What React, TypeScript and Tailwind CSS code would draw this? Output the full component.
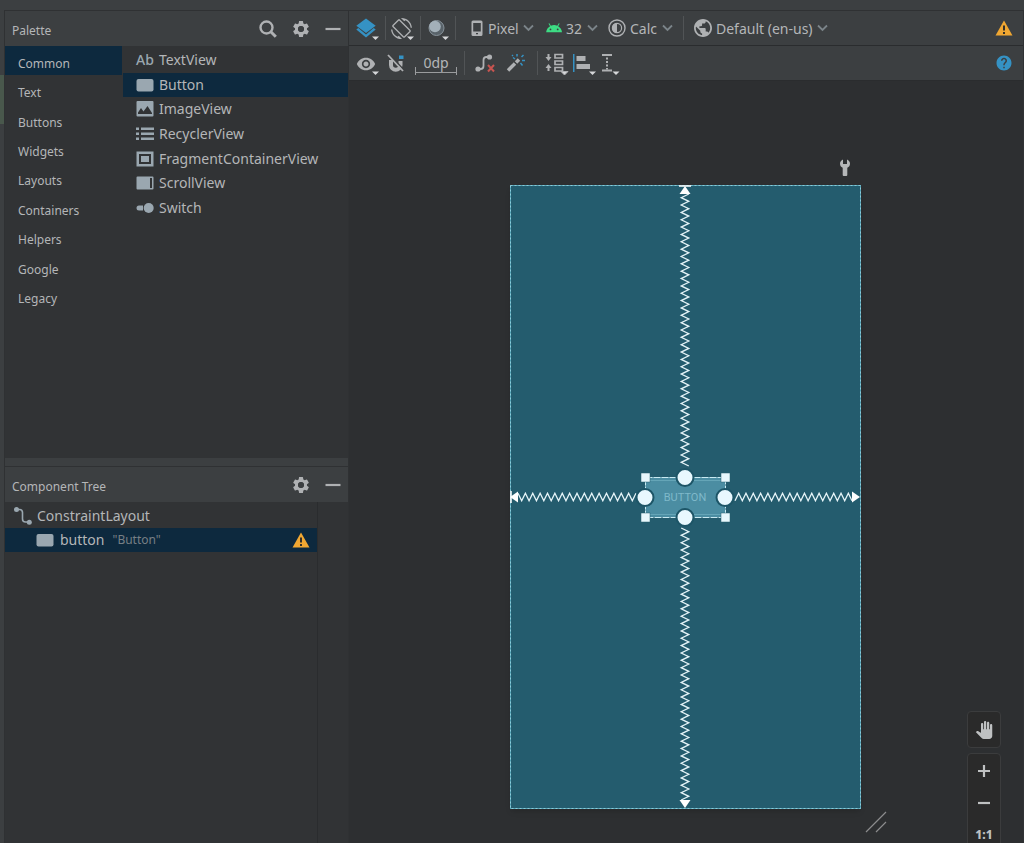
import React, { useState } from "react";
import {
  MdHelp,
  MdPanTool,
  MdPublic,
  MdScreenRotation,
  MdSettings,
  MdVisibility,
} from "react-icons/md";

const categories = [
  "Common",
  "Text",
  "Buttons",
  "Widgets",
  "Layouts",
  "Containers",
  "Helpers",
  "Google",
  "Legacy",
];

const ButtonIcon = () => (
  <svg width="18" height="14" viewBox="0 0 18 14" fill="#9aa7b0">
    <rect x="0.5" y="1" width="17" height="12.5" rx="2" />
  </svg>
);

const WarningIcon = () => (
  <svg width="18" height="18" viewBox="0 0 18 18">
    <path d="M9 1.500 17.500 16.500H.5z" fill="#f0a732" />
    <path d="M8 6.500h2v5H8zM8 13h2v2H8z" fill="#33302a" />
  </svg>
);

const widgets: { name: string; icon: React.ReactNode }[] = [
  {
    name: "TextView",
    icon: <span className="text-[14px] font-medium text-[#9aa7b0]">Ab</span>,
  },
  { name: "Button", icon: <ButtonIcon /> },
  {
    name: "ImageView",
    icon: (
      <svg width="18" height="16" viewBox="0 0 18 16">
        <rect x="0.5" width="17" height="15.5" rx="1" fill="#9aa7b0" />
        <path d="M2 13V11.500L5 7l2.500 3.500L11.500 5l4.500 7v1z" fill="#313335" />
      </svg>
    ),
  },
  {
    name: "RecyclerView",
    icon: (
      <svg width="18" height="14" viewBox="0 0 18 14" fill="#9aa7b0">
        <path d="M0 .5h3v2.5H0zM5 .5h13v2.5H5zM0 5.5h3V8H0zM5 5.5h13V8H5zM0 10.5h3V13H0zM5 10.5h13V13H5z" />
      </svg>
    ),
  },
  {
    name: "FragmentContainerView",
    icon: (
      <svg width="18" height="16" viewBox="0 0 18 16" fill="#9aa7b0">
        <path fillRule="evenodd" d="M.5.5h17v15H.5zM3 3v10h12V3z" />
        <rect x="5" y="5" width="8" height="6" />
      </svg>
    ),
  },
  {
    name: "ScrollView",
    icon: (
      <svg width="18" height="14" viewBox="0 0 18 14" fill="#9aa7b0">
        <path fillRule="evenodd" d="M1.5.5h15a1 1 0 0 1 1 1v11a1 1 0 0 1-1 1h-15a1 1 0 0 1-1-1v-11a1 1 0 0 1 1-1zM14 2v10h2V2z" />
      </svg>
    ),
  },
  {
    name: "Switch",
    icon: (
      <svg width="18" height="12" viewBox="0 0 18 12" fill="#9aa7b0">
        <path d="M7 3.5H3a2.5 2.5 0 0 0 0 5h4z" />
        <circle cx="12.7" cy="6" r="5" />
      </svg>
    ),
  },
];

const Caret = () => <path d="M16 20.5h7L19.5 24z" fill="#d5d7d9" />;

const Separator = () => <div className="h-6 w-px bg-[#515456]" />;

interface IconButtonProps {
  label: string;
  children: React.ReactNode;
  className?: string;
}

const IconButton: React.FC<IconButtonProps> = ({ label, children, className = "" }) => (
  <button aria-label={label} title={label} className={`flex shrink-0 items-center justify-center ${className}`}>
    {children}
  </button>
);

interface PickerProps {
  label: string;
  value: string;
  icon: React.ReactNode;
}

const Picker: React.FC<PickerProps> = ({ label, value, icon }) => (
  <label className="flex shrink-0 items-center gap-1">
    {icon}
    <select aria-label={label} className="appearance-none bg-transparent pt-[2px] text-[14px] leading-5 outline-none">
      <option>{value}</option>
    </select>
    <svg width="11" height="8" viewBox="0 0 11 8" fill="none" stroke="#7b8489" strokeWidth="1.800">
      <path d="M1 1.500 5.500 6 10 1.500" />
    </svg>
  </label>
);

const PanelHeader: React.FC<{ title: string; search?: boolean }> = ({ title, search }) => (
  <div className="flex h-9 shrink-0 items-center gap-[14px] border-t border-[#2f3133] bg-[#3c3f41] px-[7px]">
    <h2 className="flex-1 pt-1 text-[12px] leading-4">{title}</h2>
    {search && (
      <IconButton label="Search">
        <svg width="18" height="18" viewBox="0 0 18 18" fill="none" stroke="#afb1b3">
          <circle cx="7.500" cy="7.500" r="6" strokeWidth="2.400" />
          <path d="m11.800 11.800 5 5" strokeWidth="3" />
        </svg>
      </IconButton>
    )}
    <IconButton label="Settings">
      <svg width="20" height="20" viewBox="0 0 20 20">
        <MdSettings size={20} color="#afb1b3" />
        <circle cx="10" cy="10" r="3" fill="#3c3f41" />
      </svg>
    </IconButton>
    <IconButton label="Hide">
      <svg width="16" height="16" viewBox="0 0 16 16">
        <path d="M.5 8h15" stroke="#afb1b3" strokeWidth="2.200" />
      </svg>
    </IconButton>
  </div>
);

const Palette = () => {
  const [category, setCategory] = useState("Common");
  const [widget, setWidget] = useState("Button");

  return (
    <section className="flex h-[448px] shrink-0 flex-col">
      <PanelHeader title="Palette" search />
      <div className="flex flex-1">
        <ul className="flex h-[265px] w-[117px] flex-col">
          {categories.map((name) => (
            <li key={name} className="flex-1">
              <button
                onClick={() => setCategory(name)}
                className={`h-full w-full pt-[6px] pl-[13px] text-left text-[12px] leading-4 ${
                  name === category ? "bg-[#0d293e]" : ""
                }`}
              >
                {name}
              </button>
            </li>
          ))}
        </ul>
        <ul className="mt-[2px] flex h-[172px] flex-1 flex-col pl-px">
          {widgets.map(({ name, icon }) => (
            <li key={name} className="flex-1">
              <button
                onClick={() => setWidget(name)}
                className={`flex h-full w-full items-center gap-[5px] pl-[13px] text-left text-[14px] leading-5 ${
                  name === widget ? "bg-[#0d293e]" : ""
                }`}
              >
                <span className="flex w-[18px] justify-center">{icon}</span>
                {name}
              </button>
            </li>
          ))}
        </ul>
      </div>
    </section>
  );
};

const ComponentTree = () => (
  <section className="flex min-h-0 flex-1 flex-col">
    <PanelHeader title="Component Tree" />
    <div className="flex flex-1">
      <div className="flex-1 border-r border-[#2a2c2e] pt-[2px]">
        <button className="flex h-6 w-full items-center gap-[5px] pl-[9px] text-[14px] leading-5">
          <svg width="18" height="18" viewBox="0 0 18 18" fill="#9aa7b0">
            <circle cx="2.500" cy="2.500" r="2.500" />
            <circle cx="15.300" cy="15.300" r="2.500" />
            <path d="M3 2.500h2.500a3 3 0 0 1 3 3v6.500a3 3 0 0 0 3 3H15" fill="none" stroke="#9aa7b0" strokeWidth="1.600" />
          </svg>
          ConstraintLayout
        </button>
        <button className="flex h-6 w-full items-center bg-[#0d293e] pr-[7px] pl-[31px] text-[14px] leading-5">
          <ButtonIcon />
          <span className="ml-[6px]">button</span>
          <span className="ml-2 flex-1 text-left text-[12px] text-[#777f85]">"Button"</span>
          <WarningIcon />
        </button>
      </div>
      <div className="w-[30px]" />
    </div>
  </section>
);

const DesignToolbar = () => (
  <div className="flex h-[35px] shrink-0 items-center border-t border-[#2f3133] bg-[#3c3f41] pr-[10px] pl-[7px]">
    <div className="flex items-center gap-[5px]">
      <IconButton label="Select design surface">
        <svg width="24" height="24" viewBox="0 0 24 24">
          <path d="m10 2.500 9.700 7.200L10 17 .3 9.700z" fill="#3592c4" />
          <path d="m.3 13.500 2-1.400L10 18.500l7.700-6.400 2 1.400L10 21.500z" fill="#3592c4" />
          <Caret />
        </svg>
      </IconButton>
      <Separator />
      <IconButton label="Orientation">
        <svg width="24" height="24" viewBox="0 0 24 24">
          <MdScreenRotation x="0" y="2" size={21} color="#afb1b3" />
          <Caret />
        </svg>
      </IconButton>
      <Separator />
      <IconButton label="System UI mode">
        <svg width="24" height="24" viewBox="0 0 24 24">
          <circle cx="10.500" cy="12" r="7.500" fill="#59636a" stroke="#87929a" strokeWidth="1" />
          <circle cx="9" cy="10.500" r="5.800" fill="#a3b0b9" />
          <Caret />
        </svg>
      </IconButton>
      <Separator />
    </div>
    <div className="ml-[14px] flex flex-1 items-center gap-[10px]">
      <Picker
        label="Device"
        value="Pixel"
        icon={
          <svg width="14" height="18" viewBox="0 0 14 18" fill="#afb1b3">
            <path fillRule="evenodd" d="M3 1.500h8a1.500 1.500 0 0 1 1.500 1.500v12.500A1.500 1.500 0 0 1 11 17H3a1.500 1.500 0 0 1-1.500-1.500V3A1.500 1.500 0 0 1 3 1.500zM3.200 4v8.500h7.600V4zM6 14v1.200h2V14z" />
          </svg>
        }
      />
      <Picker
        label="API version"
        value="32"
        icon={
          <svg width="18" height="18" viewBox="-2 0 25 24" fill="#3ddc84">
            <path d="M17.600 9.480l1.840-3.180c.16-.31.04-.69-.26-.85-.29-.15-.65-.06-.83.220l-1.880 3.240a11.463 11.463 0 0 0-8.940 0L5.650 5.670a.643.643 0 0 0-.87-.2c-.28.180-.37.540-.22.830L6.400 9.480A10.780 10.780 0 0 0 1 18h22a10.780 10.780 0 0 0-5.400-8.520zM7 15.250a1.250 1.250 0 1 1 0-2.500 1.250 1.250 0 0 1 0 2.500zm10 0a1.250 1.250 0 1 1 0-2.500 1.250 1.250 0 0 1 0 2.500z" />
          </svg>
        }
      />
      <Picker
        label="Theme"
        value="Calc"
        icon={
          <svg width="18" height="18" viewBox="0 0 18 18">
            <circle cx="9" cy="9" r="8" fill="none" stroke="#afb1b3" strokeWidth="1.400" />
            <circle cx="9" cy="9" r="4.600" fill="none" stroke="#afb1b3" strokeWidth="1.200" />
            <path d="M9 4a5 5 0 0 0 0 10z" fill="#afb1b3" />
          </svg>
        }
      />
      <Separator />
      <Picker
        label="Locale"
        value="Default (en-us)"
        icon={
          <svg width="18" height="18" viewBox="2 2 20 20">
            <MdPublic size={24} color="#afb1b3" />
          </svg>
        }
      />
    </div>
    <IconButton label="Warnings">
      <WarningIcon />
    </IconButton>
  </div>
);

const ConstraintToolbar = () => (
  <div className="flex h-[36px] shrink-0 items-center border-y border-[#2a2c2e] bg-[#3c3f41] pr-[10px] pl-[7px]">
    <div className="flex flex-1 items-center gap-[7px]">
      <IconButton label="View options">
        <svg width="24" height="24" viewBox="0 0 24 24">
          <MdVisibility x="0" y="3" size={20} color="#afb1b3" />
          <Caret />
        </svg>
      </IconButton>
      <IconButton label="Autoconnection" className="mr-[3px]">
        <svg width="18" height="20" viewBox="0 0 18 20" fill="none">
          <path d="M4 7v5a4.500 4.500 0 0 0 9.500 0V8" stroke="#afb1b3" strokeWidth="4" />
          <path d="M12 2.500h4.500V6H12z" fill="#3592c4" />
          <path d="M2.500 1.500 17 17" stroke="#3c3f41" strokeWidth="1.500" />
          <path d="M1 2 16 18" stroke="#afb1b3" strokeWidth="1.800" />
        </svg>
      </IconButton>
      <button className="flex flex-col items-center pt-1 text-[14px] leading-4">
        0dp
        <svg className="-mt-1" width="42" height="8" viewBox="0 0 42 8" fill="none" stroke="#9a9c9e">
          <path d="M.5 0v8M41.500 0v8M.5 5.500h41" />
        </svg>
      </button>
      <Separator />
      <IconButton label="Clear constraints" className="mx-[3px]">
        <svg width="20" height="20" viewBox="0 0 20 20" fill="#afb1b3">
          <circle cx="3" cy="16" r="2.600" />
          <circle cx="14.500" cy="4" r="2.600" />
          <path d="M3 16h2.500a3 3 0 0 0 3-3V7a3 3 0 0 1 3-3h3" fill="none" stroke="#afb1b3" strokeWidth="1.800" />
          <path d="m13 12 6 6.500m0-6.500-6 6.500" stroke="#c75450" strokeWidth="2" />
        </svg>
      </IconButton>
      <IconButton label="Infer constraints" className="mr-[5px]">
        <svg width="20" height="20" viewBox="0 0 20 20" fill="none">
          <path d="M3 17.500 10 10.500" stroke="#afb1b3" strokeWidth="3.400" />
          <path d="m11 9.500 3-3" stroke="#afb1b3" strokeWidth="3.400" />
          <path d="M8 4.500 10 6M12 1v2.500M18.500 2 16.500 4M17 7.500h3M15.500 10l2 2.500M7 2l1 1" stroke="#3592c4" strokeWidth="1.500" />
        </svg>
      </IconButton>
      <Separator />
      <div className="flex gap-1">
        <IconButton label="Pack">
          <svg width="24" height="24" viewBox="0 0 24 24" fill="none" stroke="#afb1b3">
            <path d="M3.500 3v4M3.500 20v-4" strokeWidth="2" />
            <path d="M.5 6h6l-3 4zM.5 17h6l-3-4z" fill="#afb1b3" stroke="none" />
            <path d="M10 3.500h7.500v3.500H10zM10 10h7.500v3.500H10zM10 16.500h7.500V20H10z" strokeWidth="1.700" />
            <Caret />
          </svg>
        </IconButton>
        <IconButton label="Align">
          <svg width="24" height="24" viewBox="0 0 24 24" fill="#afb1b3">
            <path d="M0 3h1.500v18H0z" fill="#3592c4" />
            <path d="M3.500 5h9v5h-9zM3.500 13H17v5H3.500z" />
            <Caret />
          </svg>
        </IconButton>
        <IconButton label="Guidelines">
          <svg width="24" height="24" viewBox="0 0 24 24" fill="none" stroke="#afb1b3">
            <path d="M1 4h10M1 19.500h10" strokeWidth="2.200" />
            <path d="M6 6.500v12" strokeWidth="2" strokeDasharray="2 1.500" />
            <path d="M11.500 20.500h7L15 24z" fill="#d5d7d9" stroke="none" />
          </svg>
        </IconButton>
      </div>
    </div>
    <IconButton label="Help">
      <MdHelp size={18} color="#3592c4" />
    </IconButton>
  </div>
);

// zigzag spring from (0, 0) along the x axis
const spring = (length: number) => {
  const points = [];
  const count = Math.round(length / 3.7);
  for (let i = 0; i <= count; i++) {
    points.push(`${(i * length) / count},${i % 2 ? -3.8 : 3.8}`);
  }
  return points.join(" ");
};

const Spring: React.FC<{ transform: string; length: number }> = ({ transform, length }) => (
  <g transform={transform}>
    <polyline points={spring(length)} fill="none" stroke="#e4f3f7" strokeWidth="1.300" />
    <path d={`M${length} -5.500 l8 5.500 l-8 5.500z`} fill="#ffffff" />
  </g>
);

const corners = [
  [135, 292],
  [215, 292],
  [135, 332],
  [215, 332],
];

const anchors = [
  [175, 292],
  [175, 332],
  [135, 312],
  [215, 312],
];

const Blueprint = () => (
  <div className="relative flex h-[624px] w-[351px] shrink-0 items-center justify-center bg-[#245c6e] shadow-md">
    <button className="h-10 w-20 bg-[#4b8da2] pt-[2px] font-['Roboto',sans-serif] text-[11px] text-[#7fb9ca]">
      BUTTON
    </button>
    <svg className="pointer-events-none absolute inset-0 h-full w-full" viewBox="0 0 351 624">
      <rect x="0.500" y="0.500" width="350" height="623" fill="none" stroke="#4f9fb3" />
      <rect x="0.500" y="0.500" width="350" height="623" fill="none" stroke="#8ccbd9" strokeDasharray="2 2" />
      <Spring transform="translate(126 312) rotate(180)" length={118} />
      <Spring transform="translate(225 312)" length={117} />
      <Spring transform="translate(175 281) rotate(-90)" length={272} />
      <Spring transform="translate(175 343) rotate(90)" length={272} />
      <path d="M169 1h12M1 306v12" stroke="#ffffff" strokeWidth="1.500" />
      <rect x="135.500" y="292.500" width="80" height="40" fill="none" stroke="#c9eaf2" strokeDasharray="7 1" />
      <path d="M139 295.500h73M139 329.500h73" stroke="#65a5b7" />
      {corners.map(([x, y]) => (
        <rect key={`${x}-${y}`} x={x - 4} y={y - 4} width="9" height="9" fill="#e8f7fc" stroke="#245c6e" strokeWidth="0.500" />
      ))}
      {anchors.map(([x, y]) => (
        <circle key={`${x}-${y}`} cx={x} cy={y + 0.5} r="8.500" fill="#e8f8fe" stroke="#1d5567" strokeWidth="2" />
      ))}
    </svg>
  </div>
);

const ZoomControls = () => (
  <div className="absolute top-[630px] right-[22px] flex w-[34px] flex-col gap-[5px]">
    <button aria-label="Pan" className="flex h-[37px] items-center justify-center rounded border border-[#3b3c3d] bg-[#2a2a2a]">
      <MdPanTool size={18} color="#bfc1c2" />
    </button>
    <div className="flex flex-col items-center rounded border border-[#3b3c3d] bg-[#2a2a2a] pt-px">
      <button aria-label="Zoom in" className="flex h-8 items-center">
        <svg width="14" height="14" viewBox="0 0 14 14" stroke="#bfc1c2" strokeWidth="2.200">
          <path d="M1 7h12M7 1v12" />
        </svg>
      </button>
      <button aria-label="Zoom out" className="flex h-8 items-center">
        <svg width="14" height="14" viewBox="0 0 14 14" stroke="#bfc1c2" strokeWidth="2.200">
          <path d="M1 7h12" />
        </svg>
      </button>
      <button className="h-8 text-[12px] font-extrabold text-[#bfc1c2]">1:1</button>
    </div>
  </div>
);

const Canvas = () => (
  <div className="relative flex min-h-0 flex-1 items-start justify-center overflow-hidden bg-[#2d2f31] pt-[77px] pr-[2px]">
    <div className="flex flex-col">
      <div className="flex h-[27px] items-start justify-end pt-px pr-[10px]">
        <svg width="12" height="18" viewBox="0 0 12 18">
          <path d="M4 .5v4.500h4V.5c1.800.8 3 2.300 3 4.200 0 1.800-1 3.200-2.700 4V16a1 1 0 0 1-1 1H4.700a1 1 0 0 1-1-1V8.700C2 7.900 1 6.500 1 4.700 1 2.800 2.200 1.300 4 .5z" fill="#b5b7b8" />
        </svg>
      </div>
      <Blueprint />
      <svg className="-mr-[26px] self-end" width="22" height="26" viewBox="0 0 22 26" stroke="#8b8c8d" strokeWidth="1.200">
        <path d="M1 23 21 3M11 23l10-10" />
      </svg>
    </div>
    <ZoomControls />
  </div>
);

export default function App() {
  return (
    <div className="flex h-screen flex-col overflow-hidden bg-[#3c3f41] pt-[10px] font-['Noto_Sans',sans-serif] text-[#b4b6b8]">
      <div className="flex min-h-0 flex-1">
        <div className="w-1 shrink-0 pt-[65px]">
          <div className="h-[49px] bg-[#49584c]" />
        </div>
        <aside className="flex w-[345px] shrink-0 flex-col gap-2 border-x border-[#2f3133]">
          <div className="bg-[#313335]">
            <Palette />
          </div>
          <div className="flex min-h-0 flex-1 flex-col bg-[#313335]">
            <ComponentTree />
          </div>
        </aside>
        <main className="flex min-w-0 flex-1 flex-col border-r border-[#303234]">
          <DesignToolbar />
          <ConstraintToolbar />
          <Canvas />
        </main>
      </div>
    </div>
  );
}
